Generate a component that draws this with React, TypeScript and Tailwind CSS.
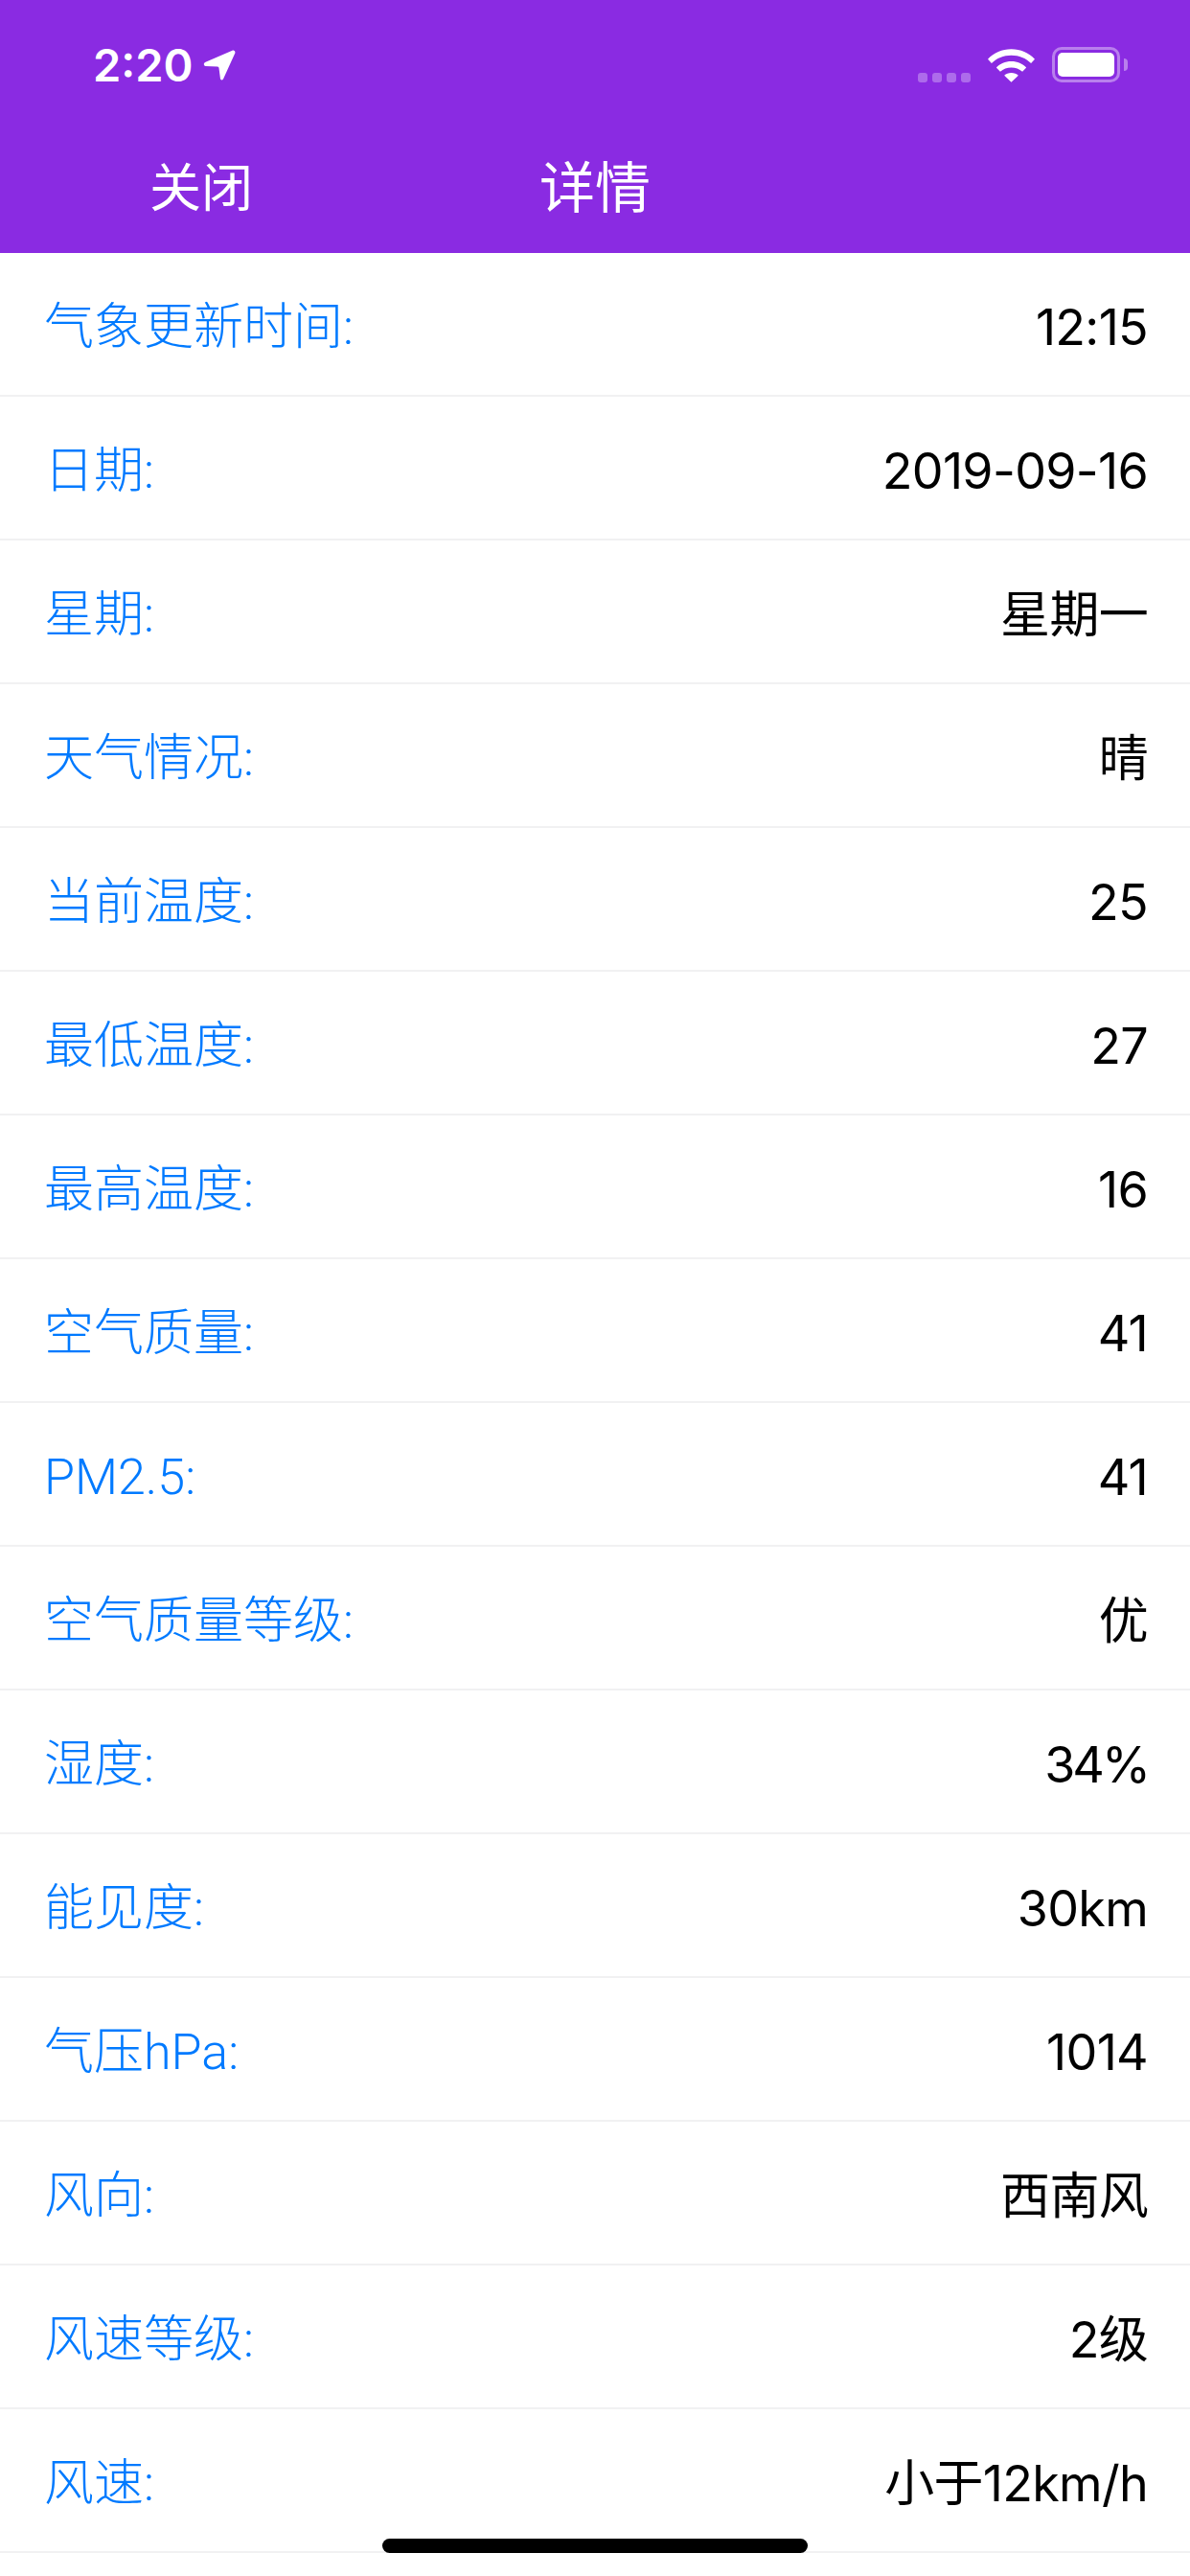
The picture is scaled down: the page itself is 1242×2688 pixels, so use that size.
const rows: [string, string, string][] = [
  ["气象更新时间:", "12:15", ""],
  ["日期:", "2019-09-16", ""],
  ["星期:", "星期一", ""],
  ["天气情况:", "晴", ""],
  ["当前温度:", "25", ""],
  ["最低温度:", "27", ""],
  ["最高温度:", "16", ""],
  ["空气质量:", "41", ""],
  ["PM2.5:", "41", ""],
  ["空气质量等级:", "优", ""],
  ["湿度:", "34%", "tracking-[-3px]"],
  ["能见度:", "30km", ""],
  ["气压hPa:", "1014", ""],
  ["风向:", "西南风", ""],
  ["风速等级:", "2级", ""],
  ["风速:", "小于12km/h", ""],
];

function Wifi() {
  return (
    <svg width="49" height="36" viewBox="0 0 50 36" fill="#fff">
      <path d="M0 11.500C6.500 5 15 1 25 1s18.500 4 25 10.500l-4 4.500C40.500 10.500 33.500 7.500 25 7.500S9.500 10.500 4 16z" />
      <path d="M9 20.500C13 16.500 18.500 14 25 14s12 2.500 16 6.500l-4.200 4.500C33.500 22 29.500 20.500 25 20.500S16.500 22 13.200 25z" />
      <path d="M17.500 29c2-1.800 4.500-2.800 7.500-2.800s5.500 1 7.500 2.800L25 36z" />
    </svg>
  );
}

export default function App() {
  return (
    <div className="w-[1242px] h-[2688px] bg-white relative overflow-hidden [font-family:Inter,'Noto_Sans_CJK_SC',sans-serif]">
      <header className="h-[264px] bg-[#8a2be2] text-white">
        <div className="h-[132px] flex items-start justify-between">
          <div className="flex items-center pl-[97px] pt-[45px]">
            <span className="text-[47px] leading-[46px] font-semibold">2:20</span>
            <svg className="ml-[10px]" width="34" height="32" viewBox="0 0 34 32" fill="#fff">
              <path d="M31 0.500 L2 13 Q-0.500 15 2 17 L15 17.500 Q16.500 17.500 16.500 19 L18 30.500 Q19.500 32.500 21 30.500 L33.500 3 Q33.500 0 31 0.500z" />
            </svg>
          </div>
          <div className="flex items-center pr-[65px] pt-[49px]">
            <div className="flex items-end gap-[5px] h-[36px] mr-[18px]">
              <span className="w-[10px] h-[10px] rounded-[3px] bg-white/30" />
              <span className="w-[10px] h-[10px] rounded-[3px] bg-white/30" />
              <span className="w-[10px] h-[10px] rounded-[3px] bg-white/30" />
              <span className="w-[10px] h-[10px] rounded-[3px] bg-white/30" />
            </div>
            <Wifi />
            <div className="ml-[18px] flex items-center">
              <div className="w-[71px] h-[37px] rounded-[10px] border-[3px] border-white/40 p-[3px]">
                <div className="w-full h-full bg-white rounded-[5px]" />
              </div>
              <div className="ml-[4px] w-[4px] h-[13px] rounded-r-[4px] bg-white/40" />
            </div>
          </div>
        </div>
        <div className="h-[132px] flex items-start pt-[30px] pl-[156px]">
          <span className="text-[54px] leading-[70px]">关闭</span>
          <span className="ml-[299px] -mt-[1px] text-[58px] leading-[70px]">详情</span>
        </div>
      </header>
      <main>
        {rows.map(([k, v, extra], i) => (
          <div key={i} className="h-[150px] border-b-[2px] border-[#f1f1f2] flex items-center justify-between pl-[46px] pr-[44px] pt-[8px]">
            <span className="text-[52px] leading-[64px] font-light text-[#007aff] [font-family:Roboto,'Noto_Sans_CJK_SC',sans-serif]">{k}</span>
            <span className={`text-[52px] leading-[64px] text-black tracking-[-0.7px] ${extra}`}>{v}</span>
          </div>
        ))}
      </main>
      <div className="absolute left-[399px] top-[2649px] w-[444px] h-[15px] rounded-full bg-black" />
    </div>
  );
}
